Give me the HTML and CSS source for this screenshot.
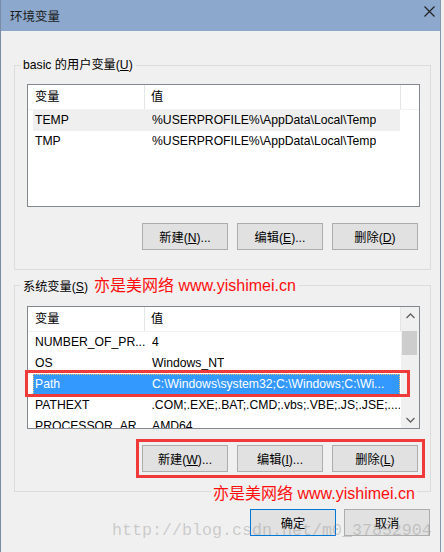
FILE: index.html
```html
<!DOCTYPE html>
<html lang="zh-CN">
<head>
<meta charset="utf-8">
<title>环境变量</title>
<link rel="stylesheet" href="styles.css">
</head>
<body>
<div class="window">
  <div class="titlebar">
    <span class="title">环境变量</span>
    <svg class="close" width="11" height="11" viewBox="0 0 11 11"><path d="M0.5 0.5 L10.5 10.5 M10.5 0.5 L0.5 10.5" stroke="#1f1f1f" stroke-width="1.1" fill="none"/></svg>
  </div>
  <div class="content">
    <div class="group">
      <div class="legend">basic 的用户变量(<u>U</u>)</div>
      <div class="list">
        <div class="list-main">
          <div class="lv-header"><div class="hcell h1">变量</div><div class="hcell h2">值</div><div class="hfill"></div></div>
          <div class="row grey"><span class="c1">TEMP</span><span class="c2">%USERPROFILE%\AppData\Local\Temp</span></div>
          <div class="row"><span class="c1">TMP</span><span class="c2">%USERPROFILE%\AppData\Local\Temp</span></div>
        </div>
      </div>
      <div class="buttons">
        <button class="btn">新建(<u>N</u>)...</button>
        <button class="btn">编辑(<u>E</u>)...</button>
        <button class="btn">删除(<u>D</u>)</button>
      </div>
    </div>

    <div class="group group-sys">
      <div class="legend legend-sys"><span>系统变量(<u>S</u>)</span><span class="red-note">亦是美网络 www.yishimei.cn</span></div>
      <div class="list list-sys">
        <div class="list-main">
          <div class="lv-header"><div class="hcell h1">变量</div><div class="hcell h2">值</div></div>
          <div class="row"><span class="c1">NUMBER_OF_PR...</span><span class="c2">4</span></div>
          <div class="row"><span class="c1">OS</span><span class="c2">Windows_NT</span></div>
          <div class="row blue"><span class="c1">Path</span><span class="c2">C:\Windows\system32;C:\Windows;C:\Wi...</span></div>
          <div class="row"><span class="c1">PATHEXT</span><span class="c2">.COM;.EXE;.BAT;.CMD;.vbs;.VBE;.JS;.JSE;....</span></div>
          <div class="row"><span class="c1">PROCESSOR_AR...</span><span class="c2">AMD64</span></div>
        </div>
        <div class="scrollbar">
          <div class="sb-arrow"><svg width="9" height="6" viewBox="0 0 9 6"><path d="M0.5 5 L4.5 1 L8.5 5" stroke="#606060" stroke-width="1.3" fill="none"/></svg></div>
          <div class="sb-thumb"></div>
          <div class="sb-space"></div>
          <div class="sb-arrow"><svg width="9" height="6" viewBox="0 0 9 6"><path d="M0.5 1 L4.5 5 L8.5 1" stroke="#606060" stroke-width="1.3" fill="none"/></svg></div>
        </div>
      </div>
      <div class="buttons">
        <button class="btn">新建(<u>W</u>)...</button>
        <button class="btn">编辑(<u>I</u>)...</button>
        <button class="btn">删除(<u>L</u>)</button>
      </div>
    </div>

    <div class="footer">
      <button class="btn default">确定</button>
      <button class="btn">取消</button>
    </div>
  </div>

  <div class="mark mark-row"></div>
  <div class="mark mark-btns"></div>
  <div class="red-note note-bottom">亦是美网络 www.yishimei.cn</div>
  <div class="watermark">http://blog.csdn.net/m0_37852904</div>
</div>
</body>
</html>
```
FILE: styles.css
```css
* { box-sizing: border-box; }

body {
  margin: 0;
  background: #f0f0f0;
  font-family: "Liberation Sans", "Noto Sans CJK SC", sans-serif;
  font-size: 12.2px;
  color: #000;
}

.window {
  position: relative;
  width: 441px;
  height: 552px;
  border-left: 1px solid #7a8ba6;
  border-right: 1px solid #8797b1;
  background: #f0f0f0;
  overflow: hidden;
}

.titlebar {
  height: 31px;
  background: #8ca8cc;
  display: flex;
  align-items: center;
  justify-content: space-between;
  padding: 0 5px 0 9px;
}

.title {
  font-size: 12.5px;
  color: #1a1a1a;
  font-family: "Noto Sans CJK SC", sans-serif;
}

.close {
  align-self: flex-start;
  margin-top: 6px;
}

.content {
  padding: 34px 9px 0 13px;
}

.group {
  border: 1px solid #dcdcdc;
  padding: 0 10px 19px 12px;
}

.group-sys {
  margin-top: 15px;
}

.legend {
  display: table;
  margin: -9px 0 0 -7px;
  padding: 0 3px;
  line-height: 16px;
  background: #f0f0f0;
}

.legend-sys {
  margin-top: -11px;
  line-height: 22px;
}

.red-note {
  font-family: "Liberation Sans", "Noto Sans CJK SC", sans-serif;
  font-size: 16px;
  color: #ff0d0d;
  margin-left: 6px;
}

.list {
  margin-top: 11px;
  height: 123px;
  border: 1px solid #828790;
  background: #fff;
  display: flex;
  overflow: hidden;
}

.list-sys {
  margin-top: 8px;
}

.list-main {
  flex: 1;
  min-width: 0;
}

.lv-header {
  display: flex;
  height: 25px;
  border-bottom: 1px solid #f2f2f2;
}

.hcell {
  line-height: 24px;
  border-right: 1px solid #e5e5e5;
}

.h1 {
  width: 117px;
  padding-left: 7px;
}

.h2 {
  width: 256px;
  padding-left: 6px;
}

.list-sys .h2 {
  flex: 1;
}

.hfill {
  flex: 1;
}

.row {
  display: flex;
  height: 21px;
  line-height: 21px;
  margin-left: 5px;
  width: 367px;
  white-space: nowrap;
}

.row .c1 {
  width: 117px;
  padding-left: 2px;
  overflow: hidden;
}

.row .c2 {
  padding-left: 2px;
  overflow: hidden;
}

.row.grey {
  background: #efefef;
}

.row.blue {
  background: #3399ff;
  color: #fff;
  outline: 1px dotted #f0c070;
  outline-offset: -1px;
}

.scrollbar {
  width: 18px;
  background: #f0f0f0;
  display: flex;
  flex-direction: column;
}

.sb-arrow {
  height: 17px;
  display: flex;
  align-items: center;
  justify-content: center;
}

.sb-thumb {
  margin: 7px 2px 0 1px;
  height: 24px;
  background: #cdcdcd;
}

.sb-space {
  flex: 1;
}

.buttons {
  display: flex;
  justify-content: flex-end;
  gap: 9px;
  margin-top: 16px;
  padding-right: 2px;
}

.btn {
  width: 86px;
  height: 27px;
  border: 1px solid #adadad;
  background: #e1e1e1;
  font: inherit;
  color: #000;
  padding: 0;
}

.btn.default {
  border-color: #0078d7;
}

.footer {
  display: flex;
  justify-content: flex-end;
  gap: 8px;
  margin-top: 17px;
  padding-right: 1px;
}

.mark {
  position: absolute;
  border: 3px solid #f03a3a;
}

.mark-row {
  left: 24px;
  top: 370px;
  width: 385px;
  height: 27px;
}

.mark-btns {
  left: 135px;
  top: 439px;
  width: 289px;
  height: 39px;
}

.note-bottom {
  position: absolute;
  left: 210px;
  top: 485px;
  margin: 0;
  padding: 0 2px;
  line-height: 18px;
  background: #f0f0f0;
}

.watermark {
  position: absolute;
  left: 111px;
  top: 521px;
  font-family: "Liberation Mono", monospace;
  font-size: 16.67px;
  line-height: 20px;
  color: rgba(120, 120, 120, 0.32);
  white-space: nowrap;
}
```
